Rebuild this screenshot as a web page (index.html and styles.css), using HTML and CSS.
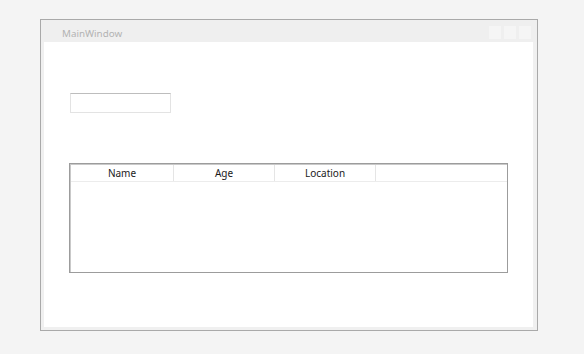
FILE: index.html
```html
<!DOCTYPE html>
<html lang="en">
<head>
    <meta charset="UTF-8">
    <meta name="viewport" content="width=device-width, initial-scale=1.0">
    <title>MainWindow</title>
    <link rel="stylesheet" href="styles.css">
</head>
<body>

    <div class="window">
        <div class="titlebar">
            <span class="title">MainWindow</span>
            <div class="caption-buttons">
                <span class="caption-btn"></span>
                <span class="caption-btn"></span>
                <span class="caption-btn"></span>
            </div>
        </div>
        <div class="client">
            <input type="text" class="textbox">
            <div class="listview">
                <div class="list-header">
                    <div class="col first">Name</div>
                    <div class="col">Age</div>
                    <div class="col">Location</div>
                    <div class="col filler"></div>
                </div>
                <div class="list-body">
                    <!-- rows go here -->
                </div>
            </div>
        </div>
    </div>

</body>
</html>
```

FILE: styles.css
```css
body {
    margin: 0;
    padding: 19px 0 0 40px;
    background-color: #f4f4f4;
    font-family: 'Noto Sans', 'Segoe UI', sans-serif;
    color: #000;
}
.window {
    width: 489px;
    height: 307px;
    border: 1px solid #a9a9a9;
    background-color: #f0f0f0;
    display: flex;
    flex-direction: column;
    padding: 0 4px 3px 3px;
}
.titlebar {
    height: 22px;
    display: flex;
    align-items: center;
    justify-content: space-between;
    margin: 0 -4px 0 -3px;
    padding: 0 6px 0 21px;
    background-color: #efefef;
}
.title {
    font-size: 9.8px;
    color: #b3b3b3;
    padding-top: 4px;
}
.caption-buttons {
    display: flex;
    gap: 3px;
    padding-top: 3px;
}
.caption-btn {
    width: 12px;
    height: 13px;
    background-color: #f5f5f5;
}
.client {
    flex: 1;
    background-color: #fff;
    display: flex;
    flex-direction: column;
    align-items: flex-start;
    padding: 51px 0 0 25px;
}
.textbox {
    width: 101px;
    height: 20px;
    margin: 0 0 0 1px;
    padding: 0;
    box-sizing: border-box;
    border: 1px solid #e3e3e3;
    border-top-color: #bdbdbd;
    background-color: #fff;
}
.listview {
    margin-top: 50px;
    width: 439px;
    height: 110px;
    box-sizing: border-box;
    border: 1px solid #9c9c9c;
    box-shadow: inset 1px 1px 0 #c9c9c9;
    padding: 1px 0 0 1px;
    background-color: #fff;
    display: flex;
    flex-direction: column;
}
.list-header {
    display: flex;
    height: 16px;
    border-bottom: 1px solid #ececec;
    background-color: #fff;
}
.col {
    width: 101px;
    box-sizing: border-box;
    border-right: 1px solid #e5e5e5;
    font-size: 10px;
    line-height: 16px;
    text-align: center;
    color: #1a1a1a;
}
.col.first {
    width: 103px;
}
.col.filler {
    flex: 1;
    border-right: none;
}
.list-body {
    flex: 1;
}
```
